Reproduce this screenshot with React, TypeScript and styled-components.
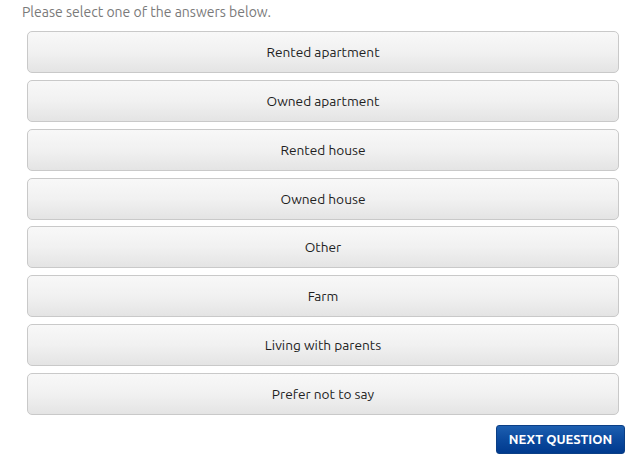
import React from "react";
import styled, { createGlobalStyle } from "styled-components";

const Global = createGlobalStyle`
  html, body { margin: 0; padding: 0; background: #ffffff; }
  body { font-family: "Ubuntu", "Noto Sans", "Open Sans", sans-serif; }
`;

const Page = styled.div`
  width: 640px;
  height: 465px;
  box-sizing: border-box;
  padding-top: 3px;
`;

const Prompt = styled.div`
  font-size: 14px;
  color: #7a7a7a;
  padding-left: 22px;
  height: 19px;
  line-height: 19px;
`;

const List = styled.div`
  margin: 9px 0 0 27px;
  width: 592px;
  display: flex;
  flex-direction: column;
  gap: 6.85px;
`;

const Answer = styled.button`
  height: 42px;
  width: 100%;
  box-sizing: border-box;
  border: 1px solid #c9c9c9;
  border-radius: 5px;
  background: linear-gradient(to bottom, #f8f8f8 0%, #f1f1f1 50%, #e4e4e4 100%);
  font-family: inherit;
  font-size: 13.7px;
  color: #1e1e1e;
  cursor: pointer;
  padding: 0;
`;

const Footer = styled.div`
  display: flex;
  justify-content: flex-end;
  padding-right: 15px;
  margin-top: 10px;
`;

const NextButton = styled.button`
  width: 129px;
  height: 29px;
  box-sizing: border-box;
  border: 1px solid #0b3f86;
  border-radius: 3px;
  background: linear-gradient(to bottom, #1d5fb0 0%, #0c4a9e 50%, #003a8e 100%);
  color: #ffffff;
  font-family: inherit;
  font-weight: bold;
  font-size: 13px;
  padding: 0;
  cursor: pointer;
`;

const answers = [
  "Rented apartment",
  "Owned apartment",
  "Rented house",
  "Owned house",
  "Other",
  "Farm",
  "Living with parents",
  "Prefer not to say",
];

export default function App() {
  return (
    <Page>
      <Global />
      <Prompt>Please select one of the answers below.</Prompt>
      <List>
        {answers.map((a) => (
          <Answer key={a}>{a}</Answer>
        ))}
      </List>
      <Footer>
        <NextButton>NEXT QUESTION</NextButton>
      </Footer>
    </Page>
  );
}
